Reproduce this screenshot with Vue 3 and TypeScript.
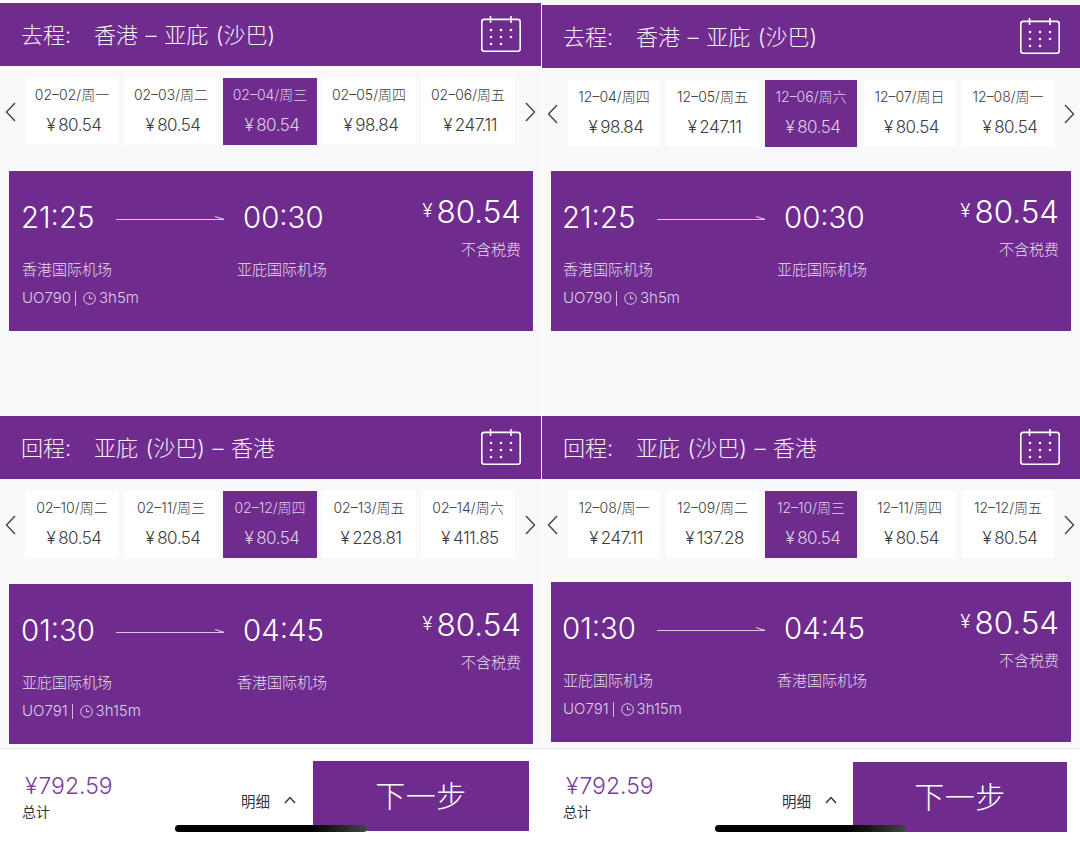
<script setup lang="ts">
interface Day { label: string; price: string; selected?: boolean }
interface Leg {
  prefix: string; route: string; days: Day[]; depart: string; arrive: string;
  from: string; to: string; flight: string; duration: string;
}
const mk = (rows: [string, string][]): Day[] =>
  rows.map(([label, price], i) => ({ label, price, selected: i === 2 }))

const panes: { cls: string; legs: Leg[] }[] = [
  { cls: 'left', legs: [
    { prefix: '去程:', route: '香港 – 亚庇 (沙巴)', days: mk([['02–02/周一','80.54'],['02–03/周二','80.54'],['02–04/周三','80.54'],['02–05/周四','98.84'],['02–06/周五','247.11']]),
      depart: '21:25', arrive: '00:30', from: '香港国际机场', to: '亚庇国际机场', flight: 'UO790', duration: '3h5m' },
    { prefix: '回程:', route: '亚庇 (沙巴) – 香港', days: mk([['02–10/周二','80.54'],['02–11/周三','80.54'],['02–12/周四','80.54'],['02–13/周五','228.81'],['02–14/周六','411.85']]),
      depart: '01:30', arrive: '04:45', from: '亚庇国际机场', to: '香港国际机场', flight: 'UO791', duration: '3h15m' },
  ]},
  { cls: 'right', legs: [
    { prefix: '去程:', route: '香港 – 亚庇 (沙巴)', days: mk([['12–04/周四','98.84'],['12–05/周五','247.11'],['12–06/周六','80.54'],['12–07/周日','80.54'],['12–08/周一','80.54']]),
      depart: '21:25', arrive: '00:30', from: '香港国际机场', to: '亚庇国际机场', flight: 'UO790', duration: '3h5m' },
    { prefix: '回程:', route: '亚庇 (沙巴) – 香港', days: mk([['12–08/周一','247.11'],['12–09/周二','137.28'],['12–10/周三','80.54'],['12–11/周四','80.54'],['12–12/周五','80.54']]),
      depart: '01:30', arrive: '04:45', from: '亚庇国际机场', to: '香港国际机场', flight: 'UO791', duration: '3h15m' },
  ]},
]
const calDots: [number, number][] = [[10,14],[20,14],[30,14],[10,21],[20,21],[30,21],[10,28],[20,28]]
</script>

<template>
  <div class="shot">
    <section v-for="pane in panes" :key="pane.cls" class="pane" :class="pane.cls">
      <div v-for="leg in pane.legs" :key="leg.prefix" class="leg">
        <header class="head">
          <div class="head-title"><span class="prefix">{{ leg.prefix }}</span><span>{{ leg.route }}</span></div>
          <svg class="cal" width="40" height="36" viewBox="0 0 40 36" fill="none" stroke="#fff" stroke-width="1.6">
            <rect x="0.8" y="3.4" width="38.4" height="31.8" rx="2.5" />
            <path d="M9.5 0v7M30 0v7" />
            <circle v-for="d in calDots" :key="d.join()" :cx="d[0]" :cy="d[1]" r="1.3" fill="#fff" stroke="none" />
          </svg>
        </header>
        <div class="dates">
          <svg class="chev" width="11" height="20" viewBox="0 0 11 20" fill="none" stroke="#444" stroke-width="1.4"><path d="M10 1 1.5 10 10 19" /></svg>
          <div class="day-row">
            <div v-for="d in leg.days" :key="d.label" class="day" :class="{ selected: d.selected }">
              <span class="day-label">{{ d.label }}</span>
              <span class="day-price"><span class="yen">¥</span>{{ d.price }}</span>
            </div>
          </div>
          <svg class="chev" width="11" height="20" viewBox="0 0 11 20" fill="none" stroke="#444" stroke-width="1.4"><path d="M1 1 9.5 10 1 19" /></svg>
        </div>
        <article class="flight">
          <div class="flight-main">
            <div class="times">
              <span class="time">{{ leg.depart }}</span>
              <svg class="arrow" width="108" height="8" viewBox="0 0 108 8" fill="none" stroke="#d8c8e2" stroke-width="1.2"><path d="M0 5.5H108L99 2.5" /></svg>
              <span class="time">{{ leg.arrive }}</span>
            </div>
            <div class="airports"><span class="airport">{{ leg.from }}</span><span>{{ leg.to }}</span></div>
            <div class="meta">
              <span>{{ leg.flight }}</span><i class="sep"></i>
              <svg width="13" height="13" viewBox="0 0 13 13" fill="none" stroke="#dccfe5" stroke-width="1"><circle cx="6.5" cy="6.5" r="5.8" /><path d="M6.5 3.2v3.5h3" /></svg>
              <span>{{ leg.duration }}</span>
            </div>
          </div>
          <div class="fare">
            <div class="fare-price"><span class="fare-yen">¥</span>80.54</div>
            <div class="fare-note">不含税费</div>
          </div>
        </article>
      </div>
      <footer class="foot">
        <div class="total">
          <div class="total-price">¥<span>792.59</span></div>
          <div class="total-label">总计</div>
        </div>
        <div class="detail">
          <span>明细</span>
          <svg width="12" height="8" viewBox="0 0 12 8" fill="none" stroke="#333" stroke-width="1.4"><path d="M1 7 6 1.5 11 7" /></svg>
        </div>
        <button class="next">下一步</button>
        <i class="home"></i>
      </footer>
    </section>
  </div>
</template>

<style>
html, body { margin: 0; background: #fff; }
</style>

<style scoped>
.shot {
  width: 1080px; height: 843px; display: flex; gap: 1px; overflow: hidden;
  font-family: Inter, "Noto Sans CJK SC", sans-serif; background: #fff; color: #333;
}
.pane { display: flex; flex-direction: column; background: #f9f9f9; height: 843px; box-sizing: border-box; position: relative; }
.left { width: 541px; padding-top: 3px; --card-gap: 26px; --card-w: 524px; --day-w: 94px; --day-gap: 5px; --days-left: 9px;
  --air-w: 215px; --btn-w: 216px; --btn-right: 12px; --btn-top: 12px; --home-left: 175px; --home-w: 192px; --cal-pad: 20px; }
.right { width: 538px; padding-top: 5px; --card-gap: 24px; --card-w: 520px; --day-w: 92px; --day-gap: 6.5px; --days-left: 10px;
  --air-w: 214px; --btn-w: 214px; --btn-right: 13px; --btn-top: 13px; --home-left: 173px; --home-w: 191px; --cal-pad: 20px; }

.leg + .leg { margin-top: 85px; }
.head {
  height: 63px; background: #6f2c8e; display: flex; align-items: center; justify-content: space-between;
  padding: 0 var(--cal-pad) 0 21px; color: #f6f1f8;
}
.head-title { font-size: 22px; font-weight: 300; word-spacing: 1.4px; display: flex; padding-bottom: 4px; }
.prefix { width: 73px; }
.cal { display: block; margin-top: -2px; }

.dates { display: flex; align-items: center; height: 67px; margin-top: 12px; padding-left: 5px; }
.day-row { display: flex; gap: var(--day-gap); margin-left: var(--days-left); margin-right: 10px; }
.chev { flex: none; display: block; }
.day {
  width: var(--day-w); height: 67px; box-sizing: border-box; background: #fff; display: flex; flex-direction: column;
  align-items: center; justify-content: center; color: #3c3c3c;
}
.day.selected { background: #6f2c8e; color: #dccfe5; }
.day-label { font-size: 14px; font-weight: 300; line-height: 18px; margin-top: -2px; }
.day-price { font-size: 17px; line-height: 20px; margin-top: 11px; padding-left: 4px; font-weight: 300; letter-spacing: -0.5px; }
.yen { margin-right: 3px; }

.flight {
  margin: var(--card-gap) 0 0 9px; width: var(--card-w); height: 160px; box-sizing: border-box; background: #6f2c8e;
  display: flex; justify-content: space-between; padding: 26px 12px 0 13px; color: #e6dcec;
}
.right .flight { padding-left: 12px; }
.times { display: flex; align-items: center; height: 40px; margin-left: -1px; }
.time { font-size: 29.4px; font-weight: 300; color: #fff; line-height: 38px; padding-top: 2px; }
.arrow { margin: 2px 19px 0 0; }
.times .time:first-child { width: 95px; }
.airports { display: flex; margin-top: 23px; font-size: 15px; line-height: 20px; font-weight: 300; }
.airport { width: var(--air-w); }
.meta { display: flex; align-items: center; margin-top: 8px; font-size: 15px; line-height: 20px; font-weight: 300; color: #dccfe5; }
.sep { width: 1px; height: 15px; background: #cdbbd8; margin: 0 5px 0 4px; }
.meta svg { margin: 0 3px 0 2px; }
.fare { text-align: right; margin-top: -1px; }
.fare-price { font-size: 31.4px; line-height: 32px; font-weight: 300; color: #fff; display: flex; align-items: flex-start; justify-content: flex-end; }
.fare-yen { font-size: 19px; line-height: 24px; margin: 3px 4px 0 0; }
.fare-note { margin-top: 12px; font-size: 15px; line-height: 20px; font-weight: 300; }

.foot {
  margin-top: auto; height: 95px; box-sizing: border-box; background: #fff; border-top: 1px solid #e6e6e6;
  display: flex; position: relative; padding-left: 22px;
}
.total { width: 196px; padding-top: 24px; }
.right .total { margin-left: -1px; }
.total-price { font-size: 23px; line-height: 26px; color: #7c3f9c; font-weight: 300; padding-left: 3px; }
.total-price span { margin-left: 1px; }
.total-label { font-size: 14px; line-height: 20px; margin-top: 3px; color: #333; }
.detail { display: flex; align-items: center; gap: 14px; height: 24px; margin: 39px 16px 0 23px; font-size: 14.5px; }
.next {
  position: absolute; top: var(--btn-top); right: var(--btn-right); width: var(--btn-w); height: 70px; border: 0; padding: 0;
  background: #6f2c8e; color: #fff; font: 300 30px/68px Inter, "Noto Sans CJK SC", sans-serif; letter-spacing: 0.5px;
}
.home {
  position: absolute; left: var(--home-left); top: 76px; width: var(--home-w); height: 7px; border-radius: 4px;
  background: linear-gradient(90deg, #000 0 70%, #444 100%);
}
</style>
